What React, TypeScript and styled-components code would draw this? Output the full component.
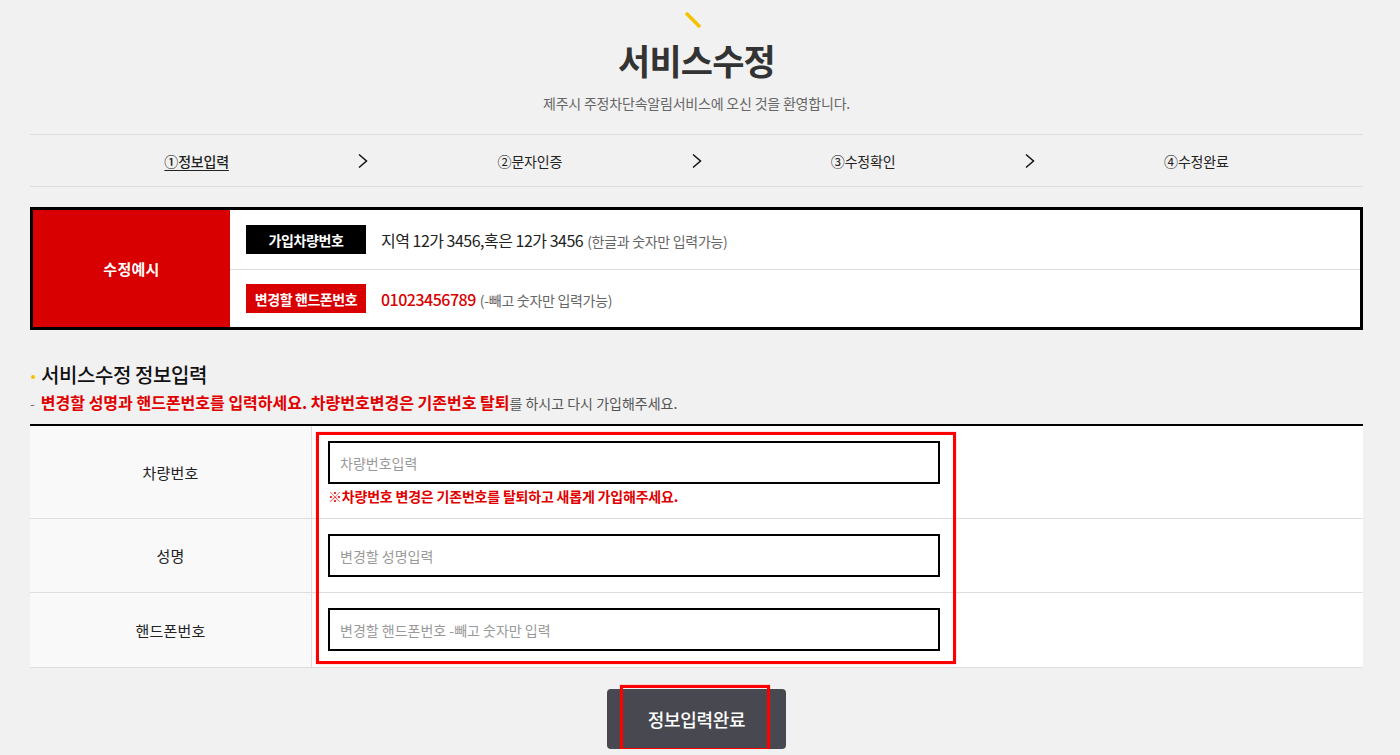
import React from "react";
import styled, { createGlobalStyle } from "styled-components";

const GlobalStyle = createGlobalStyle`
  html, body { margin: 0; padding: 0; background: #f1f1f1; }
  body {
    font-family: "Noto Sans CJK KR", "Noto Sans", sans-serif;
    color: #222;
  }
  * { box-sizing: border-box; }
`;

const Page = styled.div`
  padding: 0 37px 0 30px;
`;

const Header = styled.header`
  display: flex;
  flex-direction: column;
  align-items: center;
  padding-top: 12px;
`;

const Accent = styled.svg`
  display: block;
  margin-left: -8px;
`;

const Title = styled.h1`
  margin: 10px 0 0;
  font-size: 35px;
  line-height: 44px;
  font-weight: 700;
  color: #333;
  letter-spacing: -0.8px;
`;

const Subtitle = styled.p`
  margin: 11px 0 0;
  font-size: 14px;
  line-height: 20px;
  color: #666;
  letter-spacing: -0.2px;
`;

const Steps = styled.ol`
  list-style: none;
  margin: 21px 0 0;
  padding: 0;
  display: grid;
  grid-template-columns: repeat(4, 1fr);
  height: 53px;
  border-top: 1px solid #ddd;
  border-bottom: 1px solid #ddd;
`;

const Step = styled.li<{ $active?: boolean }>`
  position: relative;
  display: flex;
  align-items: center;
  justify-content: center;
  font-size: 14px;
  color: #222;
  letter-spacing: -0.2px;
  text-decoration: ${(p) => (p.$active ? "underline" : "none")};
  text-underline-offset: 3px;
  font-weight: ${(p) => (p.$active ? 500 : 400)};
`;

const Chevron = styled.svg`
  position: absolute;
  right: -6px;
  top: 50%;
  margin-top: -8px;
`;

const Example = styled.section`
  margin-top: 20px;
  display: grid;
  grid-template-columns: 197px 1fr;
  border: 3px solid #000;
  background: #fff;
`;

const ExampleHead = styled.div`
  background: #d80000;
  color: #fff;
  font-size: 15px;
  font-weight: 700;
  letter-spacing: 0.3px;
  display: flex;
  align-items: center;
  justify-content: center;
`;

const ExampleRows = styled.div`
  display: flex;
  flex-direction: column;
`;

const ExampleRow = styled.div`
  height: 59px;
  display: flex;
  align-items: center;
  padding-left: 16px;
  gap: 15px;
  & + & {
    border-top: 1px solid #ddd;
    height: 58px;
  }
`;

const Badge = styled.span<{ $tone: "black" | "red" }>`
  width: 120px;
  height: 29px;
  display: flex;
  align-items: center;
  justify-content: center;
  background: ${(p) => (p.$tone === "red" ? "#d80000" : "#000")};
  color: #fff;
  font-size: 14px;
  font-weight: 700;
  letter-spacing: -0.4px;
`;

const ExampleText = styled.span<{ $red?: boolean }>`
  font-size: 16px;
  color: ${(p) => (p.$red ? "#d80000" : "#222")};
  font-weight: ${(p) => (p.$red ? 500 : 400)};
  letter-spacing: -0.5px;
`;

const Hint = styled.small`
  font-size: 14px;
  color: #666;
  font-weight: 400;
  letter-spacing: -0.3px;
  margin-left: 4px;
`;

const SectionTitle = styled.h2`
  margin: 32px 0 0;
  display: flex;
  align-items: center;
  gap: 6px;
  font-size: 20px;
  line-height: 26px;
  font-weight: 500;
  color: #111;
  letter-spacing: -0.4px;
  &::before {
    content: "";
    width: 4px;
    height: 4px;
    border-radius: 50%;
    background: #f5c200;
    margin: 3px 0 0 1px;
  }
`;

const Notice = styled.p`
  margin: 4px 0 0;
  font-size: 14px;
  line-height: 20px;
  color: #555;
  display: flex;
  align-items: center;
  gap: 6px;
`;

const Dash = styled.span`
  color: #777;
`;

const NoticeStrong = styled.strong`
  color: #e00000;
  font-size: 16px;
  font-weight: 700;
  letter-spacing: 0;
`;

const FormArea = styled.div`
  position: relative;
  margin-top: 11px;
  border-top: 2px solid #000;
  background: #fff;
`;

const FormRow = styled.div<{ $h: number }>`
  display: grid;
  grid-template-columns: 282px 1fr;
  height: ${(p) => p.$h}px;
  border-bottom: 1px solid #ddd;
`;

const Th = styled.div`
  background: #f9f9f9;
  border-right: 1px solid #ddd;
  display: flex;
  align-items: center;
  justify-content: center;
  font-size: 15px;
  color: #222;
  letter-spacing: 0.2px;
`;

const Td = styled.div`
  padding: 15px 0 0 16px;
`;

const Input = styled.input`
  display: block;
  width: 612px;
  height: 43px;
  border: 2px solid #000;
  background: #fff;
  padding: 0 10px;
  font-family: inherit;
  font-size: 14px;
  outline: none;
  &::placeholder {
    color: #999;
  }
`;

const Note = styled.p`
  margin: 2px 0 0;
  font-size: 14px;
  font-weight: 700;
  color: #e00000;
  letter-spacing: -0.2px;
`;

const Mark = styled.div`
  position: absolute;
  border: 3px solid #ff0000;
  box-shadow: 0 0 1px rgba(255, 0, 0, 0.6);
  pointer-events: none;
`;

const Actions = styled.div`
  display: flex;
  justify-content: center;
  margin-top: 21px;
`;

const SubmitButton = styled.button`
  position: relative;
  width: 179px;
  height: 60px;
  border: none;
  border-radius: 4px;
  background: #484850;
  color: #fff;
  font-family: inherit;
  font-size: 18px;
  font-weight: 500;
  letter-spacing: -0.3px;
  cursor: pointer;
`;

const ChevronIcon = () => (
  <Chevron width="12" height="16" viewBox="0 0 12 16">
    <path d="M2 1.5 L9.5 8 L2 14.5" fill="none" stroke="#111" strokeWidth="1.5" />
  </Chevron>
);

export default function App() {
  return (
    <>
      <GlobalStyle />
      <Page>
        <Header>
          <Accent width="16" height="16" viewBox="0 0 16 16">
            <path d="M1 1 L15 15" stroke="#f5c200" strokeWidth="3.5" />
          </Accent>
          <Title>서비스수정</Title>
          <Subtitle>제주시 주정차단속알림서비스에 오신 것을 환영합니다.</Subtitle>
        </Header>

        <Steps>
          <Step $active>
            ①정보입력
            <ChevronIcon />
          </Step>
          <Step>
            ②문자인증
            <ChevronIcon />
          </Step>
          <Step>
            ③수정확인
            <ChevronIcon />
          </Step>
          <Step>④수정완료</Step>
        </Steps>

        <Example>
          <ExampleHead>수정예시</ExampleHead>
          <ExampleRows>
            <ExampleRow>
              <Badge $tone="black">가입차량번호</Badge>
              <ExampleText>
                지역 12가 3456,혹은 12가 3456
                <Hint>(한글과 숫자만 입력가능)</Hint>
              </ExampleText>
            </ExampleRow>
            <ExampleRow>
              <Badge $tone="red">변경할 핸드폰번호</Badge>
              <ExampleText $red>
                01023456789
                <Hint>(-빼고 숫자만 입력가능)</Hint>
              </ExampleText>
            </ExampleRow>
          </ExampleRows>
        </Example>

        <SectionTitle>서비스수정 정보입력</SectionTitle>
        <Notice>
          <Dash>-</Dash>
          <span>
            <NoticeStrong>
              변경할 성명과 핸드폰번호를 입력하세요. 차량번호변경은 기존번호 탈퇴
            </NoticeStrong>
            를 하시고 다시 가입해주세요.
          </span>
        </Notice>

        <FormArea>
          <FormRow $h={93}>
            <Th>차량번호</Th>
            <Td>
              <Input placeholder="차량번호입력" />
              <Note>※차량번호 변경은 기존번호를 탈퇴하고 새롭게 가입해주세요.</Note>
            </Td>
          </FormRow>
          <FormRow $h={74}>
            <Th>성명</Th>
            <Td>
              <Input placeholder="변경할 성명입력" />
            </Td>
          </FormRow>
          <FormRow $h={75}>
            <Th>핸드폰번호</Th>
            <Td>
              <Input placeholder="변경할 핸드폰번호 -빼고 숫자만 입력" />
            </Td>
          </FormRow>
          <Mark style={{ left: 286, top: 6, width: 640, height: 232 }} />
        </FormArea>

        <Actions>
          <SubmitButton type="button">
            정보입력완료
            <Mark style={{ left: 13, top: -4, width: 150, height: 66 }} />
          </SubmitButton>
        </Actions>
      </Page>
    </>
  );
}
